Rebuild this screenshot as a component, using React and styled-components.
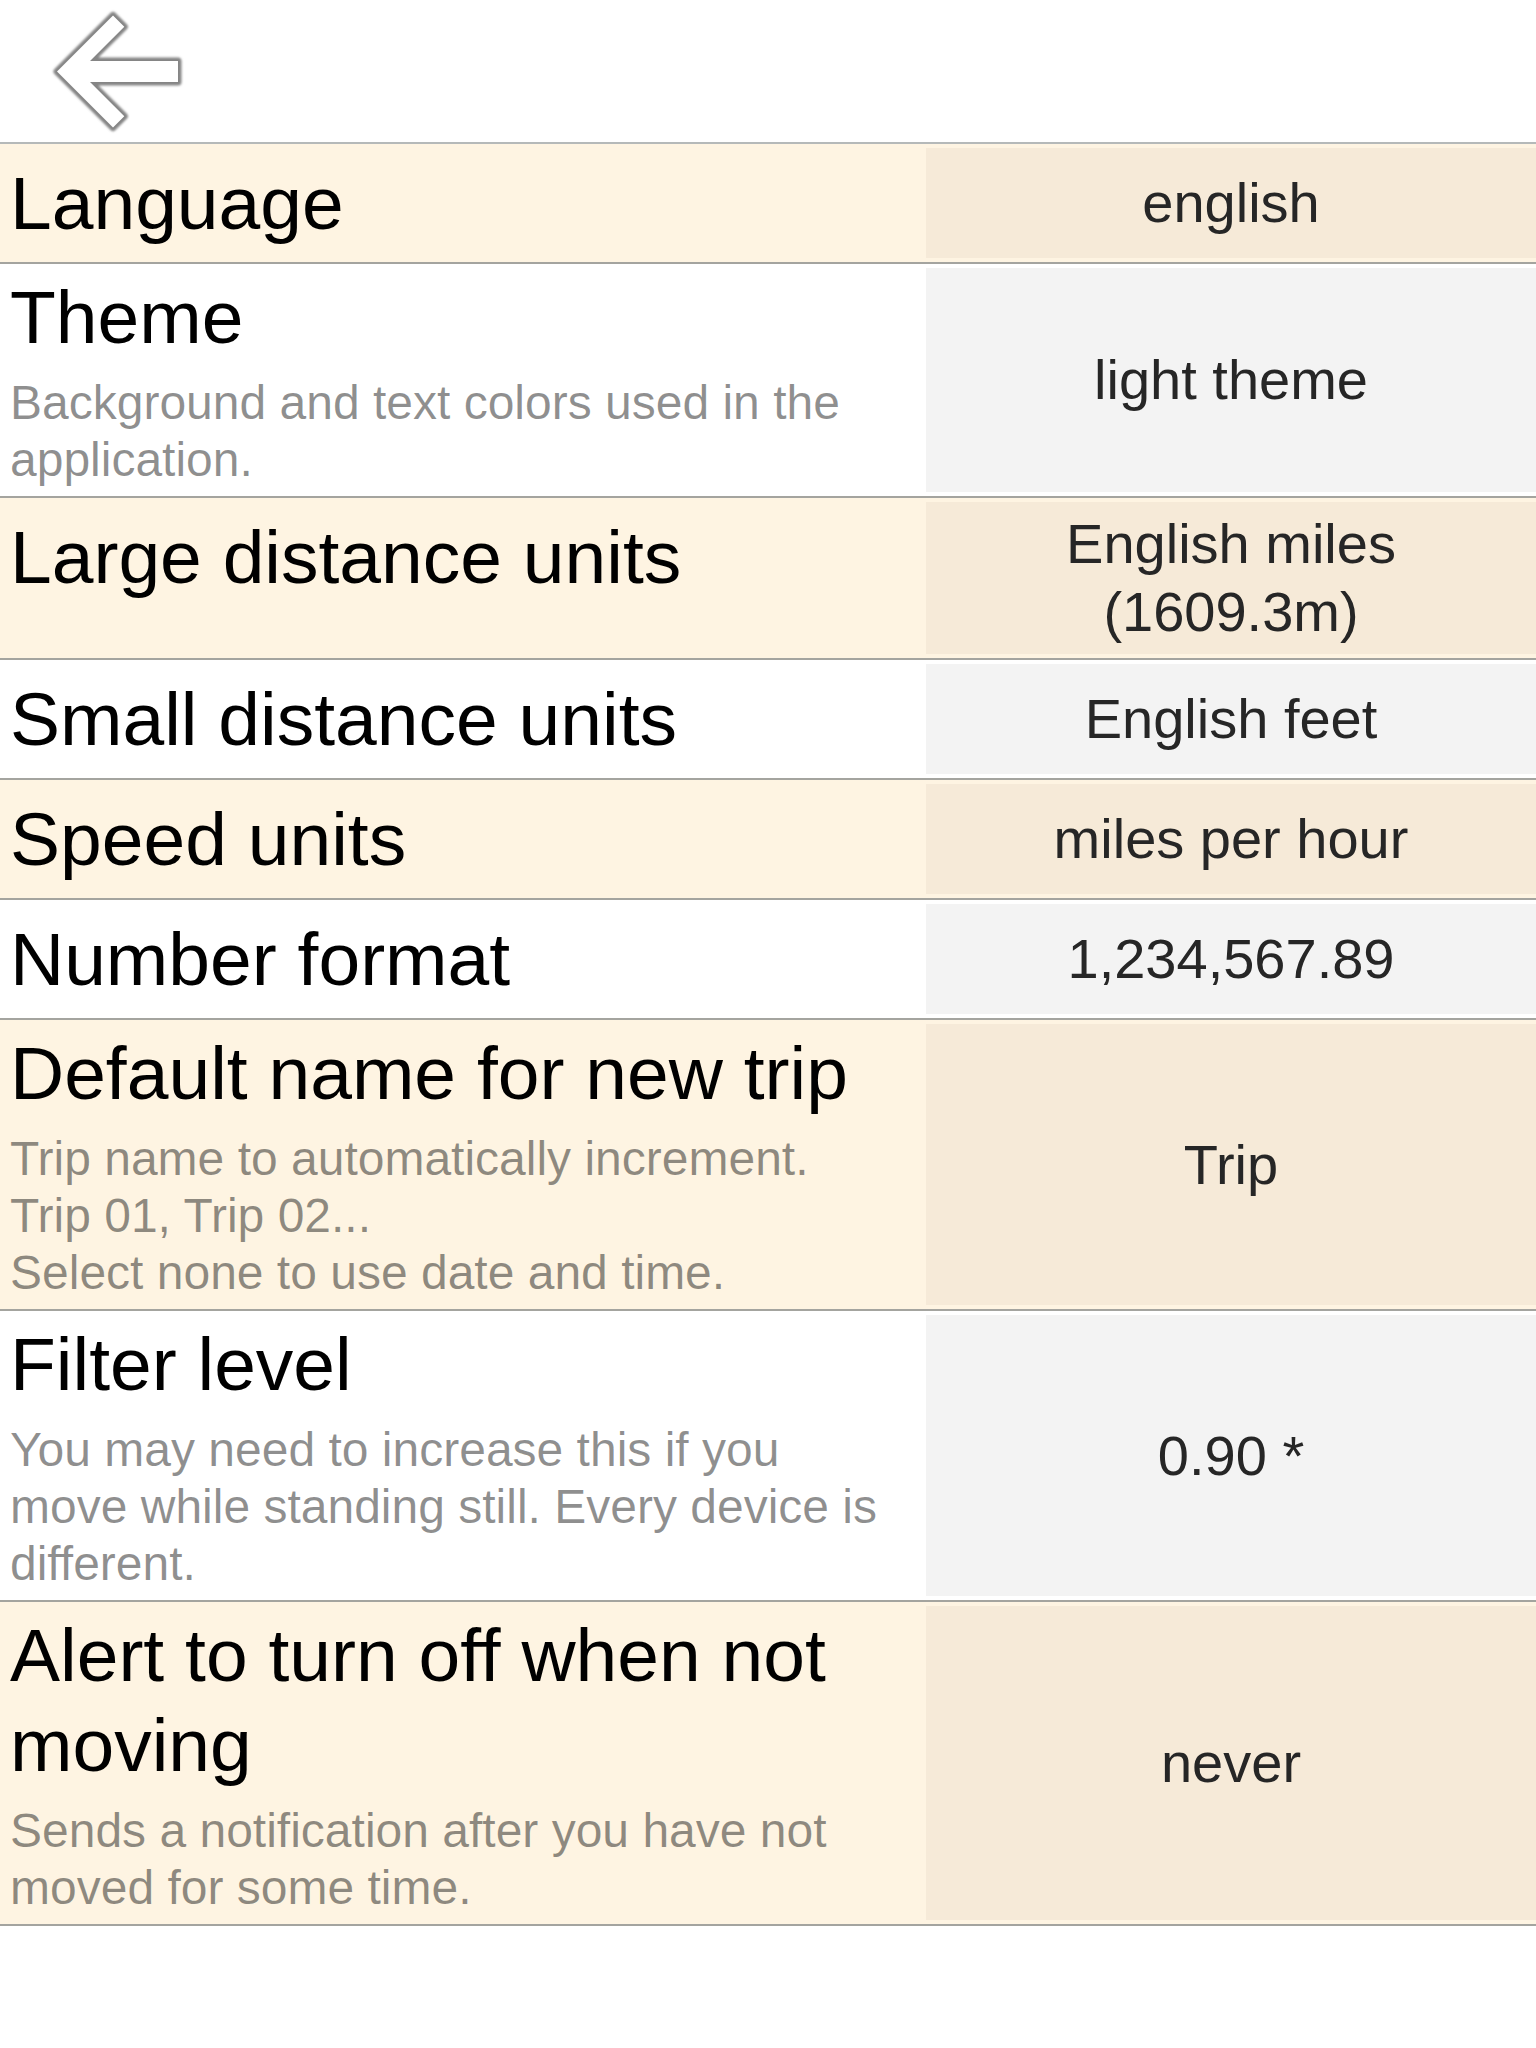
import React from "react";
import styled, { createGlobalStyle } from "styled-components";

const GlobalStyle = createGlobalStyle`
  html, body {
    margin: 0;
    padding: 0;
    background: #ffffff;
  }
  body {
    font-family: "Liberation Sans", Arial, Helvetica, sans-serif;
    -webkit-font-smoothing: antialiased;
  }
`;

const Page = styled.div`
  width: 1536px;
  min-height: 2048px;
  background: #ffffff;
  display: flex;
  flex-direction: column;
`;

const Header = styled.header`
  height: 142px;
  display: flex;
  align-items: flex-start;
  border-bottom: 2px solid #b5b9b9;
`;

const BackButton = styled.button`
  width: 190px;
  height: 142px;
  padding: 0;
  margin: 0;
  border: none;
  background: transparent;
  display: block;
  cursor: pointer;
`;

const List = styled.div`
  display: flex;
  flex-direction: column;
`;

const Row = styled.div`
  display: flex;
  align-items: stretch;
  background: ${(p) => (p.$alt ? "#fef4e2" : "#ffffff")};
  border-bottom: 2px solid #a4a49f;
`;

const LabelCell = styled.div`
  width: 926px;
  flex: 0 0 926px;
  box-sizing: border-box;
  padding: ${(p) => (p.$hasDesc ? "8px 40px 8px 10px" : "14px 40px 14px 10px")};
  display: flex;
  flex-direction: column;
`;

const Title = styled.div`
  font-size: 75px;
  line-height: 90px;
  color: #000000;
`;

const Description = styled.div`
  margin-top: 12px;
  font-size: 48px;
  line-height: 57px;
  color: rgba(0, 0, 0, 0.44);
  white-space: pre-line;
`;

const ValueCell = styled.div`
  flex: 1 1 auto;
  margin: 4px 0 4px;
  box-sizing: border-box;
  padding: 8px 14px;
  display: flex;
  align-items: center;
  justify-content: center;
  text-align: center;
  background: ${(p) => (p.$alt ? "#f6ead8" : "#f3f3f3")};
  font-size: 56px;
  line-height: 68px;
  color: #262626;
`;

const ARROW =
  "M57 71.5 L113 15.5 L124.3 26.8 L90 61 L178 61 L178 82 L90 82 L124.3 116.2 L113 127.5 Z";

const BackArrow = () => (
  <svg width="190" height="142" viewBox="0 0 190 142" aria-hidden="true">
    <defs>
      <filter id="soft" x="-10%" y="-10%" width="120%" height="120%">
        <feGaussianBlur stdDeviation="1" />
      </filter>
    </defs>
    <path
      d={ARROW}
      fill="#ffffff"
      stroke="#858585"
      strokeWidth="7"
      strokeLinejoin="round"
      filter="url(#soft)"
    />
    <path d={ARROW} fill="#ffffff" stroke="none" />
  </svg>
);

const settings = [
  { title: "Language", value: "english" },
  {
    title: "Theme",
    desc: "Background and text colors used in the application.",
    value: "light theme",
  },
  { title: "Large distance units", value: "English miles (1609.3m)" },
  { title: "Small distance units", value: "English feet" },
  { title: "Speed units", value: "miles per hour" },
  { title: "Number format", value: "1,234,567.89" },
  {
    title: "Default name for new trip",
    desc: "Trip name to automatically increment.\nTrip 01, Trip 02...\nSelect none to use date and time.",
    value: "Trip",
  },
  {
    title: "Filter level",
    desc: "You may need to increase this if you move while standing still. Every device is different.",
    value: "0.90 *",
  },
  {
    title: "Alert to turn off when not moving",
    desc: "Sends a notification after you have not moved for some time.",
    value: "never",
  },
];

export default function App() {
  return (
    <>
      <GlobalStyle />
      <Page>
        <Header>
          <BackButton aria-label="Back">
            <BackArrow />
          </BackButton>
        </Header>
        <List>
          {settings.map((s, i) => {
            const alt = i % 2 === 0;
            return (
              <Row key={s.title} $alt={alt}>
                <LabelCell $hasDesc={!!s.desc}>
                  <Title>{s.title}</Title>
                  {s.desc && <Description>{s.desc}</Description>}
                </LabelCell>
                <ValueCell $alt={alt}>{s.value}</ValueCell>
              </Row>
            );
          })}
        </List>
      </Page>
    </>
  );
}
